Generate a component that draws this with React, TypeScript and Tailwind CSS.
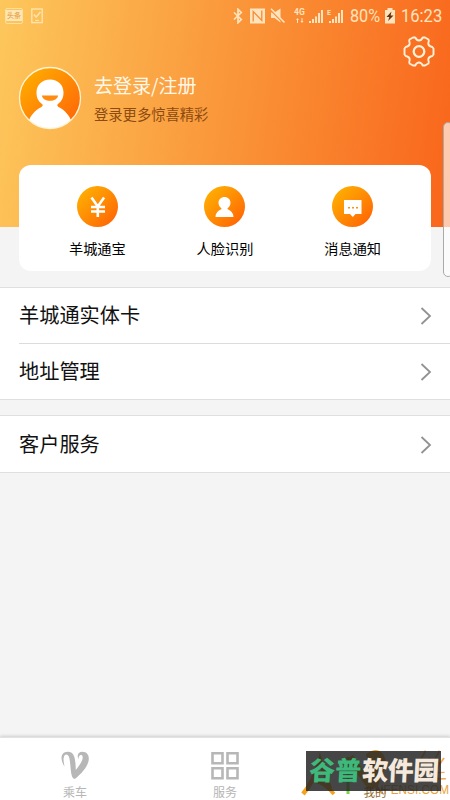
import React from 'react';

const shortcuts = [
  { label: '羊城通宝', icon: 'yuan' },
  { label: '人脸识别', icon: 'face' },
  { label: '消息通知', icon: 'message' },
];

function StatusBar() {
  return (
    <div className="flex h-[31px] items-center pl-[5px] pr-[8px] text-[#ffe3bd]">
      <div className="flex h-4 w-[18px] items-center justify-center rounded-[2px] border border-[#ffdf9f]">
        <div className="flex h-[11px] w-4 items-center justify-center bg-[#fee7b5] text-[7px] font-bold leading-none text-[#e9ac55]">
          头条
        </div>
      </div>
      <svg className="ml-[8px]" width="12" height="16" viewBox="0 0 12 16" fill="none" stroke="#ffe3ac">
        <rect x="0.8" y="1" width="10.4" height="13.6" strokeWidth="1.4" />
        <path d="M2.800 6.500l2.400 2.600L9.500 4" strokeWidth="1.600" />
        <path d="M4 12.500h4" strokeWidth="1.200" />
      </svg>
      <div className="grow" />
      <svg width="10" height="16" viewBox="0 0 10 16" fill="none" stroke="currentColor" strokeWidth="1.700">
        <path d="M1 4.500l7.300 7L5 14.700V1.300l3.300 3.200L1 11.500" />
      </svg>
      <svg className="ml-[7px]" width="15" height="16" viewBox="0 0 15 16">
        <path d="M0 .5h15v15H0z" fill="currentColor" />
        <path d="M3.200 13.500V3.500l8.600 9V2.500" fill="none" stroke="#f78b35" strokeWidth="1.300" />
      </svg>
      <svg className="ml-[5px]" width="16" height="16" viewBox="0 0 16 16">
        <path d="M1 4.500h3.500L10.500.5v14l-6-4.500H1z" fill="currentColor" />
        <path d="M0 1.500L13.500 15" stroke="#f98b35" strokeWidth="1.500" />
        <path d="M1 .8L14.500 14.500" stroke="currentColor" strokeWidth="1.600" />
      </svg>
      <svg className="ml-[8px]" width="50" height="16" viewBox="0 0 50 16" fill="currentColor">
        <text x="0" y="7" fontSize="8.500" fontWeight="700" fontFamily="Roboto, sans-serif">4G</text>
        <path d="M3 15v-3H2l1.500-2L5 12H4v3zM7.500 10v3h-1L8 15l1.500-2h-1v-3z" />
        <path d="M15 13h2v2h-2zM18 11h2v4h-2zM21 8.500h2V15h-2zM24 5h2v10h-2zM27 2h2v13h-2z" />
        <text x="33" y="6.500" fontSize="7" fontWeight="700" fontFamily="Roboto, sans-serif">E</text>
        <path d="M35 13h2v2h-2zM38 11h2v4h-2zM41 8.500h2V15h-2zM44 5h2v10h-2zM47 2h2v13h-2z" />
      </svg>
      <span className="ml-[6px] w-[30px] whitespace-nowrap font-[Roboto,sans-serif] text-[18px] leading-none">
        <span className="inline-block origin-left scale-x-[0.9]">80%</span>
      </span>
      <svg className="ml-[5px]" width="10" height="16" viewBox="0 0 10 16">
        <path d="M0 2h2.500V0h5v2H10v13.500H0z" fill="currentColor" />
        <path d="M6.500 3.500L1.500 9h2.800l-1.200 4L8.500 7.500H5.600z" fill="#65310e" />
      </svg>
      <span className="ml-[6px] w-[41px] whitespace-nowrap font-[Roboto,sans-serif] text-[18px] leading-none">
        <span className="inline-block origin-left scale-x-[0.92]">16:23</span>
      </span>
    </div>
  );
}

function Avatar() {
  return (
    <svg width="64" height="64" viewBox="0 0 64 64">
      <defs>
        <linearGradient id="avatar" x1="0" y1="0" x2="1" y2="1">
          <stop offset="0.1" stopColor="#ffab00" />
          <stop offset="0.9" stopColor="#ff6808" />
        </linearGradient>
        <clipPath id="avatarClip">
          <circle cx="32" cy="32" r="30.500" />
        </clipPath>
      </defs>
      <circle cx="32" cy="32" r="30.500" fill="url(#avatar)" />
      <g clipPath="url(#avatarClip)" fill="#fff">
        <path d="M32 13.500c-8 0-13.500 5.500-13.500 13 0 5 1.500 8.500 5.500 11.500 1 .8 1 2-.5 3C17 44 12 50 10.500 56l4 10h35l4-10C52 50 47 44 40.500 41c-1.500-1-1.500-2.200-.5-3 4-3 5.500-6.500 5.500-11.500 0-7.500-5.500-13-13.500-13z" />
        <path d="M23.800 29.500h16.400c-.8 3.700-4 5.200-8.200 5.200s-7.400-1.500-8.200-5.200z" fill="#ff8c10" />
      </g>
      <circle cx="32" cy="32" r="30.500" fill="none" stroke="#fff5d6" strokeWidth="1.300" />
    </svg>
  );
}

function ShortcutIcon({ name }: { name: string }) {
  return (
    <div className="flex size-[41px] items-center justify-center rounded-full bg-linear-to-br from-[#ffaa02] from-15% to-[#ff6a05] to-85%">
      <svg width="41" height="41" viewBox="0 0 41 41" fill="#fff">
        {name === 'yuan' && (
          <path d="M14.500 11.500l6.300 9 6.300-9M14 21h14M14 25.500h14M20.800 20V31" fill="none" stroke="#fff" strokeWidth="2.600" />
        )}
        {name === 'face' && (
          <path d="M20.500 11c-3.500 0-6 2.500-6 5.800 0 2.300 1 4 2.600 5.200.7.500.5 1.200-.3 1.500-3 1.200-5.300 4-5.300 7.500h18c0-3.500-2.300-6.300-5.300-7.500-.8-.3-1-1-.3-1.500 1.600-1.200 2.600-2.900 2.600-5.200 0-3.300-2.500-5.800-6-5.800z" />
        )}
        {name === 'message' && (
          <>
            <path d="M12 14h17.500v14h-6l-2.700 3-2.800-3h-6z" />
            <path d="M16 21h2v1.500h-2zM20 21h2v1.500h-2zM24 21h2v1.500h-2z" fill="#ff9207" />
          </>
        )}
      </svg>
    </div>
  );
}

function Row({ label, divider = false }: { label: string; divider?: boolean }) {
  return (
    <div className="pl-[19px]">
      <div className={`flex items-center justify-between pr-[18px] ${divider ? 'h-14 border-b border-[#dcdcdc]' : 'h-[55px]'}`}>
        <span className="text-[20.2px] leading-none text-[#111]">{label}</span>
        <svg width="12" height="18" viewBox="0 0 12 18" fill="none" stroke="#929292" strokeWidth="1.800">
          <path d="M1.500 1l8.500 8-8.500 8" />
        </svg>
      </div>
    </div>
  );
}

// site stamp lying over the right end of the tab bar
function Watermark() {
  return (
    <svg className="absolute bottom-0 right-0" width="150" height="63" viewBox="0 0 150 63" fontFamily="'Noto Sans CJK SC', sans-serif">
      <path d="M3 57c7-8 13-20 17-34l10 29" fill="none" stroke="#f5a31c" strokeWidth="4.500" />
      <path d="M12 44q10-1 22 13" fill="none" stroke="#f5a31c" strokeWidth="3.500" />
      <path d="M48 57V20" stroke="#79d944" strokeWidth="3" />
      <path d="M50 20l22 32" stroke="#ffad16" strokeWidth="7" />
      <path d="M66 17c9-6 14-5 18 2 3 7 2 13-2 18l-5 15-5-2z" fill="#f2a52a" />
      <text x="114" y="42" fontSize="34" fontWeight="300" fill="#f3ae48">丝</text>
      <text x="75" y="57" fontSize="13.500" fontFamily="'Liberation Sans', sans-serif" textLength="74" lengthAdjust="spacingAndGlyphs" fill="#e8a43c">NFENSI.COM</text>
      <text x="63.500" y="59.500" fontSize="11.500" fill="#8f6a30">我的</text>
      <rect x="6" y="14" width="135" height="40" fill="#262626" fillOpacity="0.85" />
      <g transform="translate(2 0) skewX(-3)" fontSize="26" fontWeight="900">
        <text x="9" y="43.500" fill="#3dba7b" textLength="52">谷普</text>
        <text x="62" y="43.500" fill="#f4e9dc" textLength="77">软件园</text>
      </g>
    </svg>
  );
}

export default function App() {
  return (
    <div className="relative flex h-[800px] w-[450px] flex-col overflow-hidden bg-[#f4f4f4] font-['Noto_Sans_CJK_SC',sans-serif]">
      <div className="h-[227px] shrink-0 bg-[linear-gradient(98deg,#fdc75c_0%,#fa983b_48%,#f9671c_98%)]">
        <StatusBar />
        <div className="flex items-center pl-[18px] pt-[35px]">
          <Avatar />
          <div className="ml-[12px] flex flex-col gap-[10px]">
            <span className="text-[19px] leading-[20px] text-[#fff8ea]">去登录/注册</span>
            <span className="text-[14.300px] leading-[17px] text-[#8b4b12]">登录更多惊喜精彩</span>
          </div>
        </div>
      </div>

      <div className="mx-[19px] -mt-[62px] grid h-[106px] shrink-0 grid-cols-3 rounded-[12px] bg-white px-[14.500px] pt-[21px]">
        {shortcuts.map((item) => (
          <div key={item.label} className="flex flex-col items-center gap-[13px]">
            <ShortcutIcon name={item.icon} />
            <span className="text-[14.200px] leading-[16px] text-black">{item.label}</span>
          </div>
        ))}
      </div>

      <div className="mt-4 border-y border-[#dfdfdf] bg-white">
        <Row label="羊城通实体卡" divider />
        <Row label="地址管理" />
      </div>
      <div className="mt-[15px] border-y border-[#dfdfdf] bg-white pt-px">
        <Row label="客户服务" />
      </div>

      <div className="mt-auto grid h-[63px] grid-cols-3 border-t border-[#e2e2e2] bg-white pt-[12px] text-[12px] leading-[14px] text-[#b5b5b5] shadow-[0_-1px_3px_rgba(0,0,0,0.16)]">
        <div className="flex flex-col items-center gap-[5px]">
          <svg width="30" height="30" viewBox="0 0 30 30" fill="#b7b7b7">
            <path d="M4.500 16.500C-.5 9 1 2 7.500 1.800c6.500-.3 8 5.200 8.300 18.200C20 15 24.500 8 22 5.300c-2-1.300-4 1-3.200 4.400-2.500-4.400-.5-8 3.500-8 5.500 0 7.600 4.600 6 10.300C26.500 18 21 24 15.500 28.500c-1 .6-1.500.5-2.500-.5C10 24 11 13 9 7 8 4 5 3.500 3.900 7c-.8 2.500-.2 5 .6 9.500z" />
          </svg>
          <span>乘车</span>
        </div>
        <div className="flex flex-col items-center gap-[5px]">
          <svg width="30" height="30" viewBox="0 0 30 30" fill="none" stroke="#b7b7b7" strokeWidth="2.600">
            <path d="M2.500 3.300h10v10h-10zM17.500 3.300h10v10h-10zM2.500 18.300h10v10h-10zM17.500 18.300h10v10h-10z" />
          </svg>
          <span>服务</span>
        </div>
      </div>

      <svg className="absolute right-[15px] top-[36px]" width="32" height="32" viewBox="0 0 32 32" fill="none" stroke="#fff1d9" strokeWidth="1.900" strokeLinejoin="round">
        <path d="M10 1.500h2.200q1.500 3 3.800 3t3.800-3H22l3.500 2q.7 1-.2 3.500-.3 3 4 4l1.200 1.500v6L29.300 20q-4.300 1-4 4 .9 2.500.2 3.500l-3.500 2h-2.200q-1.500-3-3.800-3t-3.800 3H10l-3.500-2q-.7-1 .2-3.500.3-3-4-4L1.500 18.500v-6L2.700 11q4.300-1 4-4-.9-2.500-.2-3.500z" />
        <circle cx="16" cy="15.500" r="5.300" strokeWidth="2.300" />
      </svg>
      <div className="absolute -right-[3px] top-[122px] h-[155px] w-[10px] rounded-[5px] border border-[#aaa] bg-white/65" />
      <Watermark />
    </div>
  );
}
